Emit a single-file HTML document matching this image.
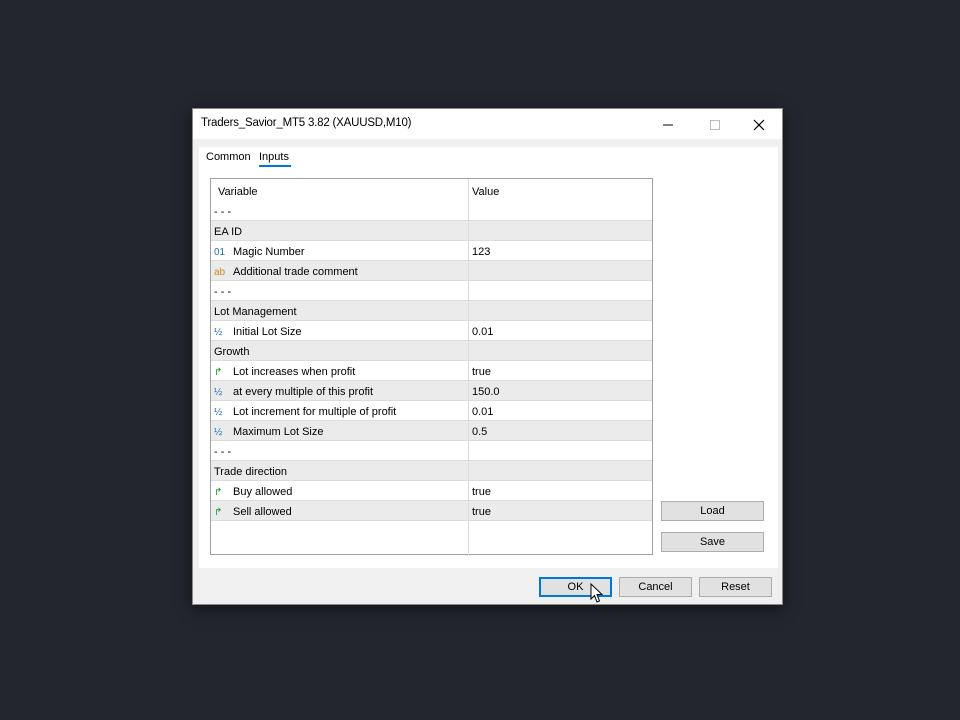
<!DOCTYPE html>
<html><head><style>
*{margin:0;padding:0;box-sizing:border-box}
body{width:960px;height:720px;background:#23262d;position:relative;font-family:"Liberation Sans",sans-serif;font-size:11px;color:#000;overflow:hidden}
.dlg{position:absolute;left:192px;top:108px;width:591px;height:497px;background:#f0f0f0;border:1px solid #8a8a8a;box-shadow:0 4px 14px rgba(0,0,0,.5)}
.title{position:absolute;left:0;top:0;width:589px;height:30px;background:#fff}
.title span{position:absolute;left:8px;top:8px;font-size:11.5px;letter-spacing:-0.2px}
.panel{position:absolute;left:6px;top:38px;width:579px;height:421px;background:#fff}
.tab{position:absolute;top:4px;font-size:11px}
.tbl{position:absolute;border:1px solid #a0a0a0;background:#fff}
.row{position:absolute;left:0;width:441px;height:20px;border-bottom:1px solid #dcdcdc;font-size:11px}
.row.g{background:#ebebeb}
.row .v{position:absolute;left:3px;top:5px}
.row .c{position:absolute;left:261px;top:5px}
.row .d{position:absolute;left:257px;top:0;width:1px;height:20px;background:#dcdcdc}
.ic{display:inline-block;width:19px;font-size:10px}
.btn{position:absolute;height:20px;background:#e1e1e1;border:1px solid #adadad;text-align:center;line-height:18px;font-size:11px}
</style></head><body>
<div class="dlg">
<div class="title"><span>Traders_Savior_MT5 3.82 (XAUUSD,M10)</span>
<svg style="position:absolute;left:468px;top:10px" width="110" height="12"><line x1="2" y1="6" x2="12" y2="6" stroke="#000"/><rect x="49.5" y="1.5" width="9" height="9" fill="none" stroke="#bbb"/><path d="M93 1L103 11M103 1L93 11" stroke="#000" stroke-width="1.2"/></svg>
</div>
<div class="panel">
<div class="tab" style="left:7px">Common</div>
<div class="tab" style="left:60px">Inputs</div>
<div style="position:absolute;left:60px;top:18px;width:32px;height:2px;background:#0078d7"></div>
<div class="tbl" style="left:11px;top:31px;width:443px;height:377px">
<div class="row" style="top:0;height:24px;border:none"><span class="v" style="left:7px;top:7px">Variable</span><span class="c" style="top:7px">Value</span><div class="d" style="height:376px"></div></div>
</div>
</div>
<div class="btn" style="left:468px;top:392px;width:103px">Load</div>
<div class="btn" style="left:468px;top:423px;width:103px">Save</div>
<div class="btn" style="left:346px;top:468px;width:73px;border:2px solid #0078d7;line-height:16px">OK</div>
<div class="btn" style="left:426px;top:468px;width:73px">Cancel</div>
<div class="btn" style="left:506px;top:468px;width:73px">Reset</div>
<svg style="position:absolute;left:397px;top:474px" width="14" height="22"><path d="M1 1L1 16L4.5 12.5L7 19L9.5 18L7 11.5L12 11.5Z" fill="#fff" stroke="#000"/></svg>
</div>
<div id="rows" style="position:absolute;left:211px;top:201px">
<div class="row" style="top:0"><span class="v">- - -</span><div class="d"></div></div>
<div class="row g" style="top:20px"><span class="v">EA ID</span><div class="d"></div></div>
<div class="row" style="top:40px"><span class="v"><span class="ic" style="color:#1e6fc0">01</span>Magic Number</span><div class="d"></div><span class="c">123</span></div>
<div class="row g" style="top:60px"><span class="v"><span class="ic" style="color:#d08a1a">ab</span>Additional trade comment</span><div class="d"></div></div>
<div class="row" style="top:80px"><span class="v">- - -</span><div class="d"></div></div>
<div class="row g" style="top:100px"><span class="v">Lot Management</span><div class="d"></div></div>
<div class="row" style="top:120px"><span class="v"><span class="ic" style="color:#1e6fc0">½</span>Initial Lot Size</span><div class="d"></div><span class="c">0.01</span></div>
<div class="row g" style="top:140px"><span class="v">Growth</span><div class="d"></div></div>
<div class="row" style="top:160px"><span class="v"><span class="ic" style="color:#1a9a30">↱</span>Lot increases when profit</span><div class="d"></div><span class="c">true</span></div>
<div class="row g" style="top:180px"><span class="v"><span class="ic" style="color:#1e6fc0">½</span>at every multiple of this profit</span><div class="d"></div><span class="c">150.0</span></div>
<div class="row" style="top:200px"><span class="v"><span class="ic" style="color:#1e6fc0">½</span>Lot increment for multiple of profit</span><div class="d"></div><span class="c">0.01</span></div>
<div class="row g" style="top:220px"><span class="v"><span class="ic" style="color:#1e6fc0">½</span>Maximum Lot Size</span><div class="d"></div><span class="c">0.5</span></div>
<div class="row" style="top:240px"><span class="v">- - -</span><div class="d"></div></div>
<div class="row g" style="top:260px"><span class="v">Trade direction</span><div class="d"></div></div>
<div class="row" style="top:280px"><span class="v"><span class="ic" style="color:#1a9a30">↱</span>Buy allowed</span><div class="d"></div><span class="c">true</span></div>
<div class="row g" style="top:300px"><span class="v"><span class="ic" style="color:#1a9a30">↱</span>Sell allowed</span><div class="d"></div><span class="c">true</span></div>
</div>
</body></html>
